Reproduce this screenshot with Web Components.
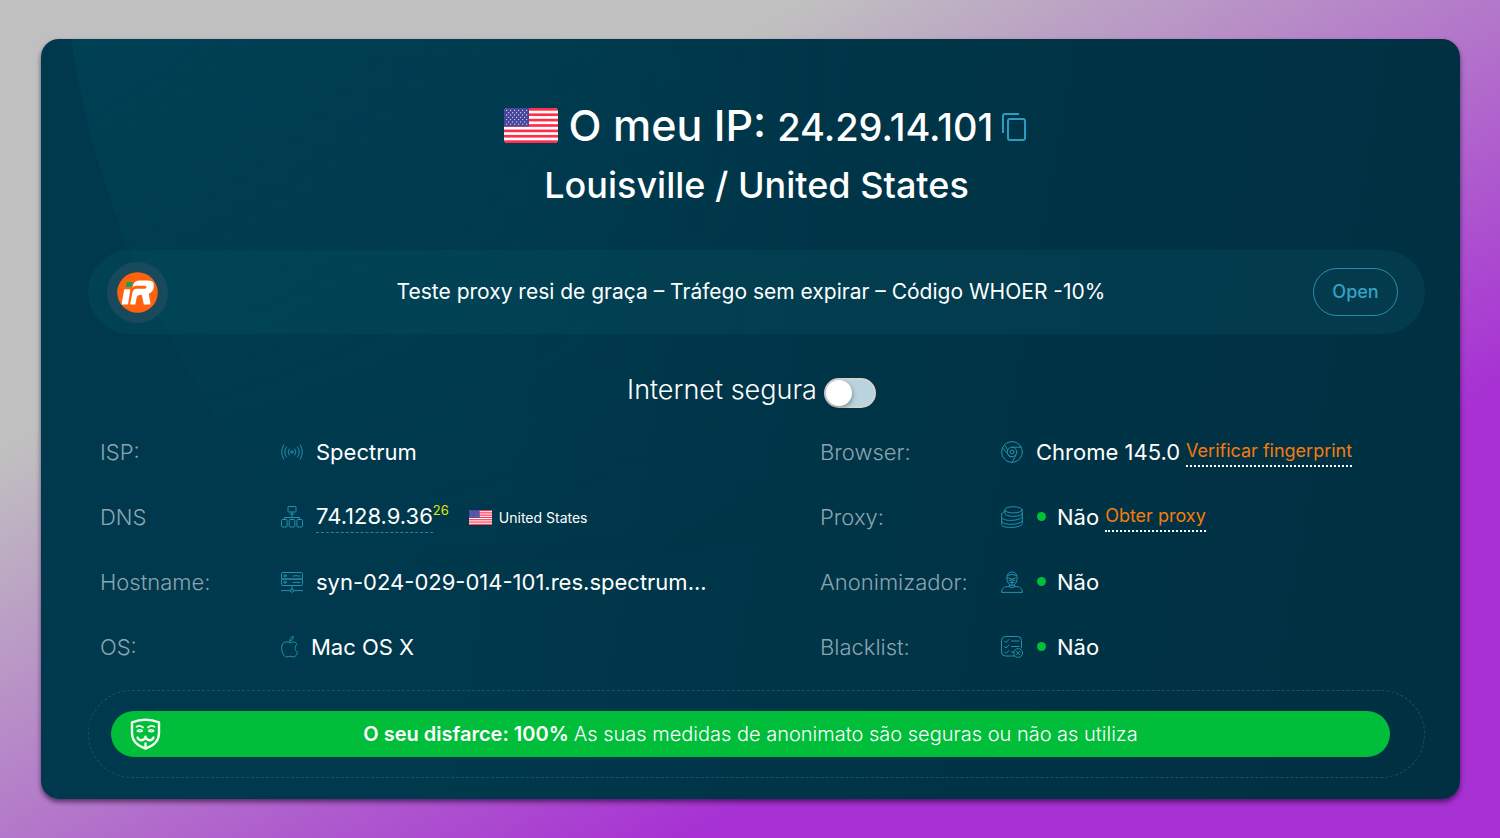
<!DOCTYPE html>
<html lang="pt">
<head>
<meta charset="utf-8">
<meta name="viewport" content="width=device-width, initial-scale=1">
<title>O meu IP</title>
<style>
  html { min-height: 100%; background: linear-gradient(to bottom right, #c0c0c0 27%, #a731d3 73%); }
  body { margin: 0; font-family: Inter, "Liberation Sans", sans-serif; color: #fff; }
</style>
</head>
<body>
<ip-card>
  <ip-heading address="24.29.14.101" place="Louisville / United States">O meu IP:</ip-heading>
  <promo-banner>Teste proxy resi de graça – Tráfego sem expirar – Código WHOER -10%</promo-banner>
  <safe-toggle>Internet segura</safe-toggle>
  <info-grid>
    <info-row label="ISP:" icon="signal">Spectrum</info-row>
    <info-row label="Browser:" icon="chrome">Chrome 145.0 <accent-link slot="extra">Verificar fingerprint</accent-link></info-row>
    <info-row label="DNS" icon="network"><dns-value count="26" country="United States">74.128.9.36</dns-value></info-row>
    <info-row label="Proxy:" icon="database" status>Não <accent-link slot="extra">Obter proxy</accent-link></info-row>
    <info-row label="Hostname:" icon="server">syn-024-029-014-101.res.spectrum...</info-row>
    <info-row label="Anonimizador:" icon="person" status>Não</info-row>
    <info-row label="OS:" icon="apple" narrow>Mac OS X</info-row>
    <info-row label="Blacklist:" icon="checklist" status>Não</info-row>
  </info-grid>
  <disguise-bar><b slot="lead">O seu disfarce: 100%</b>As suas medidas de anonimato são seguras ou não as utiliza</disguise-bar>
</ip-card>

<script>
const define = (name, render) => customElements.define(name, class extends HTMLElement {
  constructor() { super(); this.attachShadow({ mode: 'open' }); }
  connectedCallback() { this.shadowRoot.innerHTML = render(this); }
});

const icons = {
  signal: '<circle cx="11" cy="11" r="1.2"/><path d="M8.2 8q-2.4 3 0 6M5.5 6q-3.600 5 0 10M2.800 4q-4.400 7 0 14M13.800 8q2.400 3 0 6M16.500 6q3.600 5 0 10M19.200 4q4.400 7 0 14"/>',
  network: '<rect x="7" y="0.500" width="8" height="5.500" rx=".8"/><path d="M9 8h4M11 6v6M3.500 13.500V11.500h15v2"/><rect x=".5" y="13.500" width="5.600" height="7.500" rx="1"/><rect x="8.200" y="13.500" width="5.600" height="7.500" rx="1"/><rect x="15.900" y="13.500" width="5.600" height="7.500" rx="1"/>',
  server: '<rect x=".5" y="1.500" width="21" height="6.500" rx="1"/><rect x=".5" y="8" width="21" height="6.500" rx="1"/><circle cx="4" cy="4.800" r="1.200"/><circle cx="4" cy="11.200" r="1.200"/><path d="M12 5h2l1-.6 1 .6h3M12 11.500h2l1-.6 1 .6h3M11 14.500V18M.5 19.600h8.500M13 19.600h8.500"/><circle cx="11" cy="19.600" r="1.600"/>',
  apple: '<path d="M9.200 6.600C7.900 6.600 6.900 5.800 5.300 5.900 2.300 6.100.6 8.700.6 12c0 4 2.400 9 5.200 9 1.300 0 1.900-.8 3.400-.8s2.100.8 3.400.8c1.900 0 3.300-2.500 4-4.700-3.200-1.500-3.300-6.300-.5-8-1-1.600-2.200-2.400-3.800-2.400-1.300 0-2.100.7-3.100.7ZM8.800 4.800C8.700 2.500 10.200.8 12.300.6c.1 2.300-1.400 4.100-3.500 4.200Z"/>',
  chrome: '<circle cx="11" cy="11" r="10.400"/><circle cx="11" cy="11" r="4.800"/><circle cx="11" cy="11" r="2"/><path d="M11 6.200h9.200M1.500 7l5 5.500M15 13.800l-3.800 7.500M4.200 4.800l2.600 4.600M11 15.800q-2 .2-3.600-1.200"/>',
  database: '<ellipse cx="12.500" cy="3.800" rx="8.700" ry="3.100"/><path d="M3.800 4v3.200c0 4.200 17.400 4.200 17.400 0V4M.7 7.500v3.600c0 5 20.600 4 20.600-1V7M.7 11.500v3.600c0 4.800 20.600 4 20.600-1v-4M.7 15.200v3.300c0 4.500 20.600 3.500 20.600-1v-3.400M.7 7.500q1-1.500 3-2"/>',
  person: '<path d="M6 7C6 3 8 1 11 1s5 2 5 6c0 4-2 7.500-5 7.500S6 11 6 7ZM6.500 4.500q4.500-2.500 9 0M7.500 7l2.500.8M14.500 7l-2.500.8M8 9.500q3-2 6 0M9 11.500h4M11 8v6M8.500 13.500v2M13.500 13.500v2M.6 21c0-3.500 2.600-5.500 7.400-5.500q3 2.500 6 0c4.800 0 7.400 2 7.400 5.500Z"/>',
  checklist: '<path d="M13.500 20H4.500a4 4 0 0 1-4-4V4.500a4 4 0 0 1 4-4h12a4 4 0 0 1 4 4V12M3.500 5l1.500 1.500L8 3.500M3.500 10.500l1.500 1.500L8 9M3.500 16l1.500 1.500L8 14.500M10.500 5H18M10.500 10.500H18M10.500 16H13"/><circle cx="17.200" cy="17" r="4.400"/><path d="M15.500 15.300l3.400 3.400M18.900 15.300l-3.400 3.400"/>'
};

define('ui-icon', el => `
  <style>:host{display:block;width:22px;height:22px}svg{display:block}</style>
  <svg width="22" height="22" viewBox="0 0 22 22" fill="none" stroke="#2590ae" stroke-width="1" stroke-linecap="round" stroke-linejoin="round" aria-hidden="true">${icons[el.getAttribute('name')]}</svg>`);

define('us-flag', () => {
  let stripes = '', stars = '';
  for (let i = 0; i < 13; i += 2) stripes += `<rect y="${i * 35 / 13}" width="54" height="${35 / 13}" fill="#ff2f4c"/>`;
  for (let r = 0; r < 7; r++) for (let c = 0; c < (r % 2 ? 5 : 6); c++)
    stars += `<circle cx="${2.6 + c * 4 + (r % 2 ? 2 : 0)}" cy="${2.400 + r * 2.300}" r=".65"/>`;
  return `<style>:host{display:block;width:var(--flag-width,54px);border-radius:var(--flag-radius,4px);overflow:hidden}svg{display:block;width:100%}</style>
  <svg viewBox="0 0 54 35" role="img" aria-label="US"><rect width="54" height="35" fill="#fff"/>${stripes}<rect width="25" height="18.500" fill="#46479c"/><g fill="#dcdcf2">${stars}</g></svg>`;
});

define('ip-card', () => `
  <style>
    :host{display:block;position:relative;overflow:hidden;box-sizing:border-box;margin:39px 40px 39px 41px;padding:56px 35px 21px 47px;border-radius:18px;
      background:linear-gradient(100deg,#00394d 0%,#00394d 30%,#003346 65%,#003042 100%);box-shadow:0 3px 5px rgba(30,0,40,.6)}
    :host::before{content:"";position:absolute;left:19px;top:-1190px;width:2400px;height:2100px;border-radius:50%;
      background:linear-gradient(90deg,rgba(0,80,98,.35),rgba(0,66,84,0) 32%);
      mask-image:linear-gradient(#000 1190px,transparent 1720px)}
    main{position:relative}
  </style>
  <main><slot></slot></main>`);

define('ip-heading', el => `
  <style>
    :host{display:block;text-align:center}
    .line{display:flex;align-items:center;justify-content:center;height:60px;padding-left:18px}
    h1,h2,p{margin:0;font-weight:500;white-space:nowrap}
    h1{font-size:43px;line-height:60px;margin:0 11px}
    p{font-size:38px;line-height:60px;padding-top:3px}
    h2{font-size:36px;line-height:60px}
    button{display:block;border:0;padding:4px 0 0;margin-left:9px;background:none;cursor:pointer}
    svg{display:block}
  </style>
  <div class="line"><us-flag></us-flag><h1><slot></slot></h1><p>${el.getAttribute('address')}</p>
    <button aria-label="Copiar"><svg width="25" height="28" viewBox="0 0 25 28" fill="none" stroke="#2c9dc0" stroke-width="2"><rect x="6" y="6" width="17" height="21" rx="2"/><path d="M1 20V3a2 2 0 0 1 2-2h14"/></svg></button></div>
  <h2>${el.getAttribute('place')}</h2>`);

define('promo-banner', () => `
  <style>
    :host{display:grid;grid-template-columns:85px 1fr 85px;align-items:center;height:84px;margin-top:35px;padding:0 27px 0 19px;box-sizing:border-box;border-radius:42px;
      background:linear-gradient(90deg,rgba(0,80,94,.4),rgba(6,66,84,.55))}
    .logo{display:grid;place-items:center;width:61px;height:61px;border-radius:50%;background:rgba(60,84,104,.4)}
    p{margin:0;padding-right:3px;text-align:center;font-size:21px;line-height:30px}
    button{height:48px;border:1px solid #268dab;border-radius:24px;background:none;color:#36a2c4;font:500 18px/28px Inter,"Liberation Sans",sans-serif;padding:0;cursor:pointer}
  </style>
  <div class="logo"><svg width="41" height="41" viewBox="0 0 41 41" aria-hidden="true"><circle cx="20.500" cy="20.500" r="20.300" fill="#ff620f"/><path d="M9.800 10h5.800l-1.200 5H8.600Z" fill="#06a860"/><path d="M7.300 17.200h6L11 32.500H4.500Z" fill="#fff"/><path d="M15.500 15.500Q16.500 8.500 22 8.500h9q7.300 0 5.800 7-1 4.500-5 6.200l1.800 10.800h-6.800l-1.900-9.500h-2.500q-2.200 0-2.700 2.500l-1.400 7h-5.200l2.300-12q.8-3.800 4.200-3.800h7.400q2.300 0 2.500-1.500t-1.800-1.500H19q-2 0-3.500 1.800Z" fill="#fff"/></svg></div>
  <p><slot></slot></p>
  <button>Open</button>`);

define('safe-toggle', () => `
  <style>
    :host{display:flex;align-items:center;justify-content:center;gap:7px;height:59px;margin-top:26px;padding-right:10px}
    label{font-size:27px;line-height:36px;font-weight:300}
    input{appearance:none;box-sizing:border-box;width:52px;height:30px;margin:6px 0 0;padding:0;border:2px solid #d3d3d3;border-radius:15px;background:#bad4df;cursor:pointer}
    input::before{content:"";display:block;width:26px;height:26px;border-radius:50%;background:#fff;box-shadow:1px 2px 4px rgba(0,0,0,.3)}
    input:checked::before{margin-left:22px}
  </style>
  <label for="safe"><slot></slot></label><input type="checkbox" id="safe" role="switch">`);

define('info-grid', () => `
  <style>:host{display:grid;grid-template-columns:1fr 1fr;grid-auto-rows:65px;column-gap:115px;padding:0 0 0 12px}</style>
  <slot></slot>`);

define('info-row', el => `
  <style>
    :host{display:grid;grid-template-columns:181px ${el.hasAttribute('narrow') ? 17 : 22}px 1fr;align-items:center;min-width:0;white-space:nowrap;line-height:32px}
    .label{font-size:22px;font-weight:300;color:#8ba4af}
    .value{display:flex;align-items:center;margin-left:13px;font-size:22px}
    .dot{width:9px;height:9px;margin:0 11px 0 1px;border-radius:50%;background:#00bf3a}
    ::slotted(accent-link){margin-left:6px}
  </style>
  <span class="label">${el.getAttribute('label')}</span>
  <ui-icon name="${el.getAttribute('icon')}"></ui-icon>
  <div class="value">${el.hasAttribute('status') ? '<span class="dot"></span>' : ''}<span><slot></slot></span><slot name="extra"></slot></div>`);

define('accent-link', () => `
  <style>:host{display:block}a{display:block;color:#f77a0b;font-size:18px;line-height:28px;text-decoration:none;border-bottom:2px dotted #fff}</style>
  <a href="#"><slot></slot></a>`);

define('dns-value', el => `
  <style>
    :host{display:flex;align-items:center;--flag-width:23px;--flag-radius:1px}
    a{color:inherit;text-decoration:none;border-bottom:1px dashed #2286a3}
    sup{align-self:flex-start;font-size:13px;line-height:20px;color:#e5e500}
    us-flag{margin:2px 7px 0 20px}
    .country{font-size:14px;line-height:20px;margin-top:2px}
  </style>
  <a href="#"><slot></slot></a><sup>${el.getAttribute('count')}</sup><us-flag></us-flag><span class="country">${el.getAttribute('country')}</span>`);

define('disguise-bar', () => `
  <style>
    :host{display:block;box-sizing:border-box;height:88px;margin-top:11px;padding:20px 34px 20px 22px;border:1px dashed #1b5265;border-radius:44px}
    div{display:grid;grid-template-columns:32px 1fr 32px;align-items:center;height:46px;box-sizing:border-box;padding:0 19px;border-radius:23px;background:#00bd3a}
    p{margin:0;text-align:center;font-size:20px;line-height:28px;font-weight:300}
    ::slotted(b){font-weight:600;margin-right:5px}
  </style>
  <div>
    <svg width="31" height="32" viewBox="0 0 31 32" fill="none" stroke="#f2fff0" stroke-width="2.400" stroke-linecap="round" stroke-linejoin="round" aria-hidden="true"><path d="M2 4.300Q15.500-.8 29 4.300V15q0 11-13.500 15.500Q2 26 2 15Z"/><path d="M6.500 8.800q3.500-2 6.500.7M24.500 8.800q-3.500-2-6.500.7" stroke-width="1.800"/><path d="M7 13q3-2.400 5.500 0-2.700 1.600-5.500 0ZM24 13q-3-2.400-5.500 0 2.700 1.600 5.500 0Z" stroke-width="1.300"/><path d="M7.500 19.500q1.500 3.500 5 2.500 2.500-.8 3-3.300.5 2.500 3 3.300 3.500 1 5-2.500M15.500 25.500v4.500"/></svg>
    <p><slot name="lead"></slot><slot></slot></p>
  </div>`);
</script>
</body>
</html>
